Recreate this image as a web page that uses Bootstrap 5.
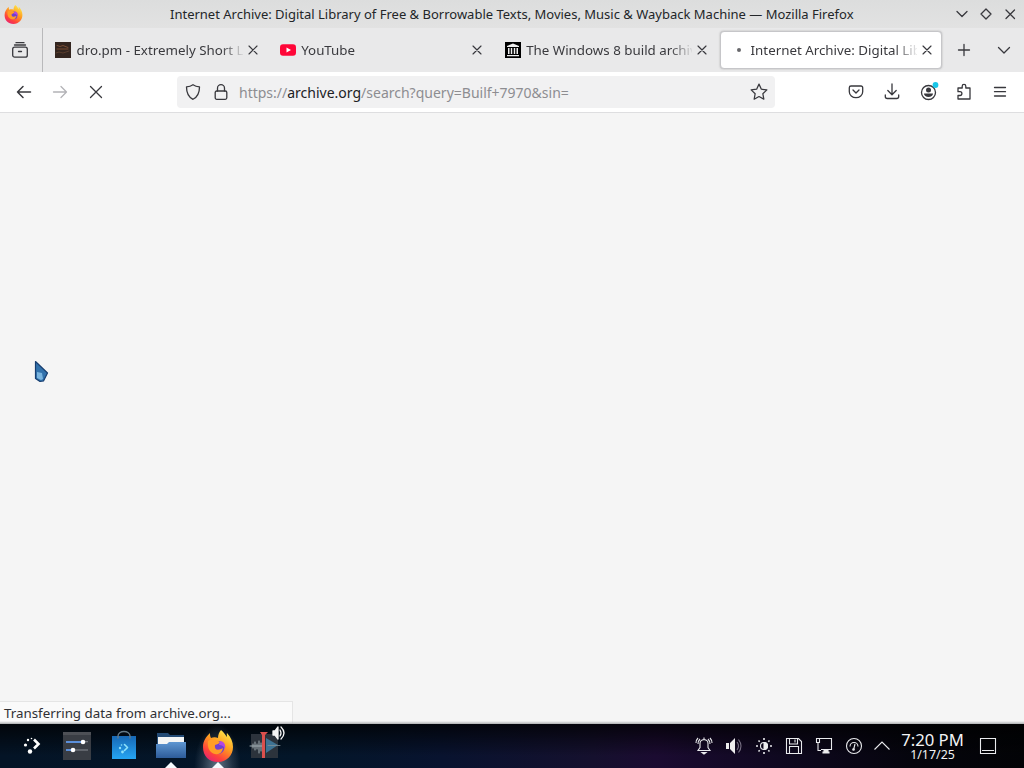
<!DOCTYPE html>
<html lang="en">
<head>
<meta charset="utf-8">
<meta name="viewport" content="width=device-width, initial-scale=1">
<title>Internet Archive: Digital Library</title>
<link href="https://cdn.jsdelivr.net/npm/bootstrap@5.3.0/dist/css/bootstrap.min.css" rel="stylesheet">
<style>
body{font-family:"Noto Sans",sans-serif;font-size:13.33px;line-height:18px;color:#2a2a2e;background:#f5f5f5;height:768px}
svg{display:block;flex:none;fill:none;stroke:#38383d;stroke-width:1.3;stroke-linecap:round;stroke-linejoin:round;overflow:visible}
.titlebar{height:28px;background:linear-gradient(#dcdddd,#e2e2e2)}
.titlebar .caption{color:#232629;padding-left:156px;margin-left:-14px;font-size:13px}
.tabstrip{height:44px;background:#e9e9ea}
.history{width:43px;border-right:1px solid #b9b9bb}
.btab{width:224.7px;padding-left:10px;gap:5.5px;height:38px;position:relative}
.btab .label{width:166px;overflow:hidden;white-space:nowrap;color:#3a3a3e;-webkit-mask-image:linear-gradient(90deg,#000 144px,transparent 168px)}
.btab .close{margin-left:-.5px;stroke-width:1.15}
.current::before{content:"";position:absolute;inset:0 1.5px 0 .5px;border-radius:4px;background:#fff;border:1px solid #c6c6c9;box-shadow:0 0 2px #aaa}
.current>*{position:relative}
.busy{width:16px;padding-left:8px}
.busy i{display:block;width:4px;height:4px;border-radius:50%;background:#68686c}
.navrow{height:41px;background:#fff;border-bottom:1px solid #dedee0;padding:0 6px}
.tool{width:36px;height:32px}
.address{width:598px;height:32px;background:#f1f1f2;border-radius:4px;margin-left:63px;padding:0 7px 0 8px}
.url{font-size:14px;color:#8d8d91;margin-left:10px;padding-top:2px}
.url b{font-weight:400;color:#202024}
.status{height:23px;width:293px;background:#fafafa;border:1px solid #e5e5e5;border-left:0;padding:2px 4px;color:#303034;margin-bottom:-3px;position:relative}
.edge{height:3px;background:linear-gradient(#ededed00,#aeb0b2);position:relative}
.panel{height:44px;background:linear-gradient(180deg,#000b 0,transparent 32px),linear-gradient(90deg,#041426 0,#031629 30%,#08132f 43%,#15102e 58%,#1b0b31 64%,#0f0820 76%,#05050d 89%,#020306)}
.launch{width:47px;position:relative}
.launch.open::after{content:"";position:absolute;bottom:0;left:18px;border:6px solid transparent;border-top:0;border-bottom:6px solid #f5fbff}
.launch.active{background:radial-gradient(ellipse at 50% 100%,#a2b4c499 0,#57677855 45%,transparent 70%)}
.tray{width:30px}
.tray svg,.desk svg{stroke:#e9eaed;stroke-width:1.1;stroke-linecap:butt;stroke-linejoin:miter}
.clock{width:72px;color:#f2f3f5}
.clock .time{font-size:16.7px;line-height:17px;padding-top:1px}
.clock .date{font-size:12.4px;line-height:14px}
.pointer{position:absolute;left:33px;top:359px}
</style>
</head>
<body class="d-flex flex-column overflow-hidden">
<header class="titlebar d-flex align-items-center">
<svg width="28" height="28" viewBox="0 0 28 28" style="stroke:none"><use href="#fox" x="4" y="5" width="19" height="19"/></svg>
<div class="caption flex-grow-1">Internet Archive: Digital Library of Free &amp; Borrowable Texts, Movies, Music &amp; Wayback Machine — Mozilla Firefox</div>
<div class="d-flex align-items-center gap-2" style="padding-right:6px">
<svg width="16" height="16"><path d="M3 5.500l5 5 5-5"/></svg><svg width="16" height="16"><path d="M8 3l5 5-5 5-5-5z"/></svg><svg width="16" height="16"><path d="M4 4l8.500 8.500M12.500 4L4 12.500"/></svg>
</div>
</header>
<nav class="tabstrip d-flex align-items-center">
<div class="history h-100 d-flex align-items-center justify-content-center pe-1"><svg width="16" height="16" style="margin-left:2px"><path d="M4 .7h8M2.500 3h11"/><rect x=".7" y="5.200" width="14.600" height="10" rx="2"/><path d="M6.500 9.500h3"/></svg></div>
<div class="d-flex" style="margin-left:2px">
<div class="btab d-flex align-items-center"><svg width="16" height="16" style="stroke:none"><path fill="#33251f" d="M0 0h16v16H0z"/><path style="stroke:#8a5738;stroke-width:.8" d="M2 3.500l3 1 3-1 5 2M2 7h11"/><path style="stroke:#624330;stroke-width:.8" d="M1 11l3-1 4 1 6-2"/></svg><span class="label">dro.pm - Extremely Short Links</span><svg class="close" width="10" height="10"><path d="M1 1l8 8M9 1L1 9"/></svg></div>
<div class="btab d-flex align-items-center"><svg width="16" height="16" style="stroke:none"><rect y="2.300" width="16" height="11.500" rx="3" fill="#ff0638"/><path fill="#fff" d="M6.500 5.500v5L11 8z"/></svg><span class="label">YouTube</span><svg class="close" width="10" height="10"><path d="M1 1l8 8M9 1L1 9"/></svg></div>
<div class="btab d-flex align-items-center" style="padding-left:10.600px;gap:5.200px"><svg width="16" height="16" style="stroke:none"><path fill="#000" d="M0 0h16v16H0z"/><path fill="#eee" d="M2 4l6-2.500L14 4v1H2zM3 6h1.500v6H3zm2.800 0h1.400v6H5.800zm3 0h1.400v6H8.800zM11.500 6H13v6h-1.500zM2 13h12v1.300H2z"/></svg><span class="label">The Windows 8 build archive</span><svg class="close" width="10" height="10"><path d="M1 1l8 8M9 1L1 9"/></svg></div>
<div class="btab current d-flex align-items-center"><span class="busy"><i></i></span><span class="label">Internet Archive: Digital Library</span><svg class="close" width="10" height="10"><path d="M1 1l8 8M9 1L1 9"/></svg></div>
</div>
<div class="d-flex align-items-center ms-auto" style="gap:24px;padding-right:12px"><svg width="16" height="16"><path d="M8 2.500v11M2.500 8h11"/></svg><svg width="16" height="16"><path d="M2.500 5.500L8 11l5.500-5.500"/></svg></div>
</nav>
<div class="navrow d-flex align-items-center">
<div class="tool d-flex align-items-center justify-content-center"><svg width="16" height="16"><path style="stroke-width:1.500" d="M14.500 8h-13M7 2.500L1.500 8 7 13.500"/></svg></div>
<div class="tool d-flex align-items-center justify-content-center"><svg width="16" height="16" style="stroke:#b3b3b7"><path d="M1.500 8h13M9 2.500L14.500 8 9 13.500"/></svg></div>
<div class="tool d-flex align-items-center justify-content-center"><svg width="16" height="16"><path d="M2.500 2.500l11 11M13.500 2.500l-11 11"/></svg></div>
<div class="address d-flex align-items-center">
<svg width="16" height="16"><path d="M8 .7c2.200 1.500 4.300 2 6.500 2.200 0 6-2 10-6.500 12.400C3.500 13 1.500 9 1.500 2.900 3.700 2.700 5.800 2.200 8 .7z"/></svg>
<svg width="16" height="16" style="margin-left:12px"><rect x="2.200" y="7" width="11.600" height="8.300" rx="1.500"/><path d="M4.500 7V4.200a3.500 3.500 0 017 0V7"/></svg>
<span class="url flex-grow-1">https://<b>archive.org</b>/search?query=Builf+7970&amp;sin=</span>
<svg width="18" height="18" viewBox="0 0 16 16"><path style="stroke-width:1.100" d="M8 1l2.100 4.500 4.900.6-3.600 3.400.9 4.900L8 12l-4.300 2.400.9-4.900L1 6.100l4.900-.6z"/></svg>
</div>
<div class="d-flex ms-auto">
<div class="tool d-flex align-items-center justify-content-center"><svg width="16" height="16"><path d="M3 2h10a1.700 1.700 0 011.700 1.700v4a6.700 6 0 01-13.400 0v-4A1.700 1.700 0 013 2zM5 6l3 3 3-3"/></svg></div>
<div class="tool d-flex align-items-center justify-content-center"><svg width="16" height="16"><path d="M8 0v10.500M3.800 6.500L8 10.700l4.200-4.200M1.300 11v1.500a2 2 0 002 2h9.400a2 2 0 002-2V11"/></svg></div>
<div class="tool d-flex align-items-center justify-content-center"><svg width="16" height="16"><circle cx="8.500" cy="8.500" r="7"/><circle cx="8.500" cy="6" r="2.500" style="fill:#38383d;stroke:none"/><path style="fill:#38383d;stroke:none" d="M4 9.500h9c0 2-2 3.500-4.500 3.500S4 11.500 4 9.500z"/><circle cx="15.500" cy="1" r="2.900" style="fill:#19c6e8;stroke:none"/></svg></div>
<div class="tool d-flex align-items-center justify-content-center"><svg width="16" height="16"><path d="M2 15v-3.500h2a1.900 1.900 0 000-3.800H2V4h4.200V2.200a1.800 1.800 0 013.600 0V4H14v11z"/></svg></div>
<div class="tool d-flex align-items-center justify-content-center"><svg width="16" height="16"><path d="M2.500 3.500h11M2.500 7.700h11M2.500 12h11"/></svg></div>
</div>
</div>
<main class="flex-grow-1 d-flex align-items-end"><div class="status">Transferring data from archive.org...</div></main>
<div class="edge"></div>
<footer class="panel d-flex">
<div class="launch d-flex align-items-center justify-content-center" style="margin-left:6px"><svg width="24" height="24" style="margin-left:9px"><g style="fill:#fff;stroke:none"><circle cx="6" cy="6" r="1.200"/><circle cx="9.500" cy="4.500" r=".8"/><circle cx="3.500" cy="11" r="1.600"/><circle cx="8" cy="17.500" r="2.200"/></g><path style="stroke:#fff;stroke-width:2.600;stroke-linecap:butt;stroke-linejoin:miter" d="M12 5.500l4.500 4.500-4.500 4.500"/></svg></div>
<div class="launch d-flex align-items-center justify-content-center"><svg width="28" height="28" style="stroke:none"><path fill="#393d44" d="M0 0h28v28H0z"/><path fill="#4d5056" d="M0 0h28v3H0z"/><path fill="#5b8fda" d="M3 9h17v2H3z"/><path fill="#888c91" d="M20 9.300h5v1h-5zM10 17.500h15v1H10z"/><path fill="#5b8fda" d="M3 17h7v2H3z"/><circle cx="20" cy="10" r="2.300" fill="#fff"/><circle cx="10" cy="18" r="2.300" fill="#fff"/></svg></div>
<div class="launch d-flex align-items-center justify-content-center"><svg width="24" height="28" style="stroke:none"><defs><linearGradient id="bag" x2="0" y2="1"><stop stop-color="#1768b5"/><stop offset="1" stop-color="#25a5f3"/></linearGradient></defs><path fill="url(#bag)" d="M0 4h24v23H0z"/><path style="stroke:#667b88;stroke-width:1.300" d="M6 6V4a6 4.500 0 0112 0v2"/><g fill="#8de1fb"><circle cx="8" cy="16" r="1.200"/><circle cx="10.500" cy="20" r="1.400"/><circle cx="9.500" cy="13" r=".8"/></g><path style="stroke:#8de1fb;stroke-width:1.600" d="M12.500 12.500l3 3-3 3"/></svg></div>
<div class="launch open d-flex align-items-center justify-content-center"><svg width="30" height="28" style="stroke:none"><defs><linearGradient id="folder" x2="0" y2="1"><stop stop-color="#5e96d1"/><stop offset="1" stop-color="#2d5c9a"/></linearGradient></defs><path fill="#244b75" d="M1 1h11l2 2h14v10H1z"/><path fill="#f4f5f5" d="M2 5h26v8H2z"/><path fill="url(#folder)" d="M0 12h11l2-2h17v16H0z"/></svg></div>
<div class="launch open active d-flex align-items-center justify-content-center"><svg width="32" height="32" viewBox="0 0 32 32" style="stroke:none"><defs>
<linearGradient id="flame" x1=".8" x2=".2" y2="1"><stop stop-color="#fff04d"/><stop offset=".42" stop-color="#ff9c20"/><stop offset=".75" stop-color="#ff433b"/><stop offset="1" stop-color="#e51e78"/></linearGradient>
<symbol id="fox" viewBox="0 0 32 32"><path fill="url(#flame)" stroke="none" d="M19 0c3 2 4 5 6 7 0-2-.5-3 0-4 4 4 6 9 6 14 0 8-6 15-15 15S1 26 1 17C1 11 4 7 8 3c0 2 0 3 1 5 2-1 5-1 7 0 0-3 1-6 3-8z"/><circle cx="16" cy="17.500" r="6.500" fill="#7040d1" stroke="none"/><path fill="#ff9d25" stroke="none" d="M6 11c4-3 8-1 12 1-1 2-3 2-5 3-1 5 3 6 8 3-1 5-4 7-8 6-5-1-8-6-7-13z"/><path fill="#b247e5" stroke="none" d="M18 11c4 0 6 4 5 8-1-3-3-4-6-4z"/></symbol></defs><use href="#fox" width="32" height="32"/></svg></div>
<div class="launch d-flex align-items-center justify-content-center"><svg width="30" height="28" style="stroke:none"><path fill="#2c333c" d="M1 2h27v24H1z"/><path fill="#3e7394" d="M16 6l12 7-12 8z"/><path style="stroke:#a3b0b5;stroke-width:1" d="M0 14h13M3 12v4M5 10v8M7 12v5M9 9v12M11 11v8"/><path style="stroke:#7f9198;stroke-width:.8" d="M18 13.500h12"/><path fill="#db504d" d="M10 0h8l-3 3v23h-3V3z"/></svg><svg class="position-absolute" width="14" height="16" style="left:31px;top:1px;stroke:#f5f5f5"><path style="fill:#f5f5f5" d="M1 6h2l3-4v12l-3-4H1z"/><path d="M8 5q2 3 0 6M9 2q6 6 0 12"/></svg></div>
<div class="d-flex ms-auto">
<div class="tray d-flex align-items-center justify-content-center"><svg width="16" height="18"><path d="M2 13.500h12l-2-3V6.500q0-3.500-4-4-4 .5-4 4v4zM8 .5v2M2 7q0-3 2-5M14 7q0-3-2-5M0 6q0-3 2-5M16 6q0-3-2-5"/><path style="fill:#eee" d="M6 15.500h4l-2 1.500z"/></svg></div>
<div class="tray d-flex align-items-center justify-content-center"><svg width="18" height="18"><path style="fill:#eee;stroke:none" d="M1 6h3v6H1zM5 6l5-5v16l-5-5z"/><path style="stroke:#777083" d="M12 5q3 4 0 8M13.500 2.500q5 6.500 0 13"/></svg></div>
<div class="tray d-flex align-items-center justify-content-center"><svg width="16" height="16"><circle cx="8" cy="8" r="3.500"/><path style="fill:#eee" d="M8 4.500a3.500 3.500 0 010 7z"/><path style="stroke-width:1.600" d="M8 0v2M8 14v2M0 8h2M14 8h2M2.500 2.500l1.200 1.200M12.300 12.300l1.200 1.200M13.500 2.500l-1.200 1.200M3.700 12.300l-1.200 1.200"/></svg></div>
<div class="tray d-flex align-items-center justify-content-center"><svg width="16" height="16"><path d="M.5.500h12l3 3v12H.500zM3.500.500V6h8V.500M3.500 15V8.500h9V15M9 1.500v3"/></svg></div>
<div class="tray d-flex align-items-center justify-content-center"><svg width="16" height="16"><path d="M4 .500h11.500v11H5M.5.500h3v4h-3zM2 4.500v8h3"/><path style="fill:#eee" d="M8 12h4v2h1v1H7v-1h1z"/></svg></div>
<div class="tray d-flex align-items-center justify-content-center"><svg width="16" height="16"><circle cx="8" cy="8" r="7.500"/><path d="M4 8.500a4 4 0 018 0M7.500 12l1.500-6"/><circle cx="7.500" cy="11.500" r=".8"/></svg></div>
<div class="tray d-flex align-items-center justify-content-center" style="width:26px"><svg width="16" height="16"><path d="M.5 11.500L8 4l7.500 7.500"/></svg></div>
<div class="clock text-center d-flex flex-column justify-content-center" style="width:75px"><div class="time">7:20 PM</div><div class="date">1/17/25</div></div>
<div class="desk d-flex align-items-center" style="width:42px;padding-left:10px;margin-right:12px"><svg width="16" height="16"><path d="M.5.500h15v15H.500zM2 12.500h12"/></svg></div>
</div>
</footer>
<svg class="pointer" width="17" height="25"><path d="M2.500 2.500l12 11.500-4 8-3.500.5-4.500-3z" style="fill:#3272ac;stroke:#173e70;stroke-width:1.200"/><path d="M4 13l5 1 1 6-2 1-4-2z" style="fill:#79b4df;stroke:none"/></svg>
<script src="https://cdn.jsdelivr.net/npm/bootstrap@5.3.0/dist/js/bootstrap.bundle.min.js"></script>
</body>
</html>
